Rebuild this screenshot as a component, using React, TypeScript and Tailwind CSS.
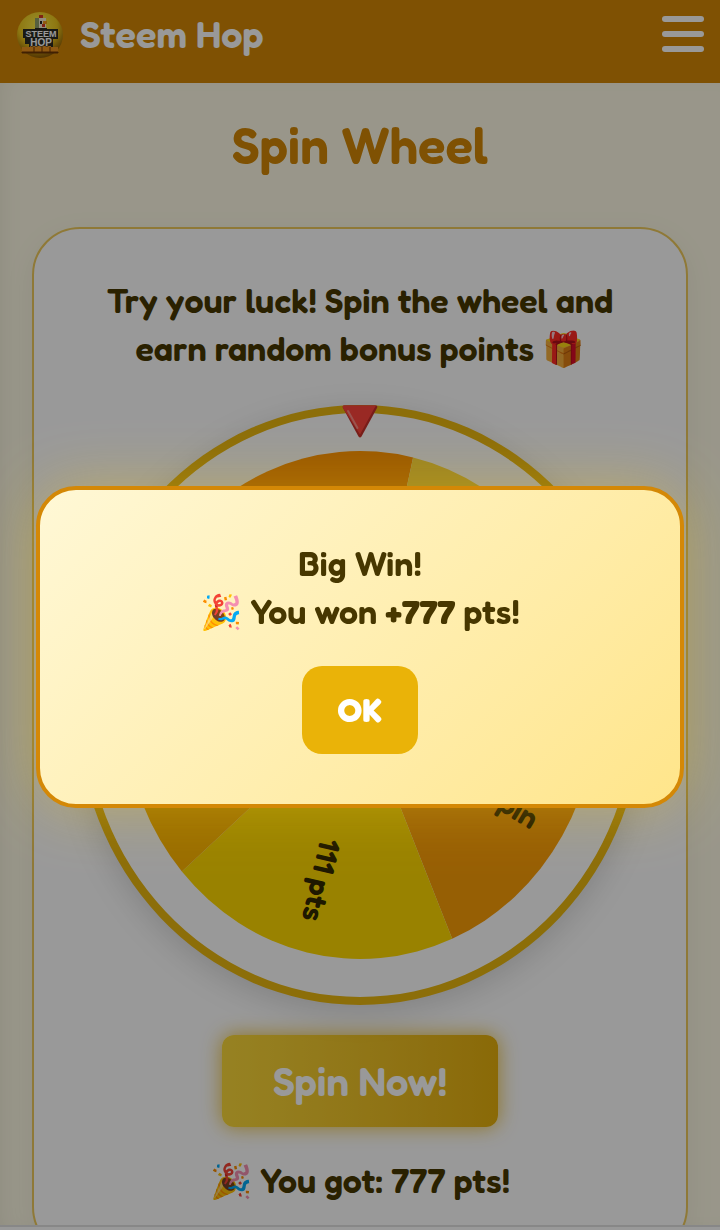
import { FC } from "react";

interface Segment {
  label: string;
  color: string;
}

const segments: Segment[] = [
  { label: "777 pts", color: "#ff9200" },
  { label: "333 pts", color: "#ffd93b" },
  { label: "Free Spin", color: "#fb9e08" },
  { label: "111 pts", color: "#ffd900" },
  { label: "555 pts", color: "#ffb600" },
];

const CX = 275;
const CY = 292;
const RX = 236;
const RY = 254;
const STEP = 360 / segments.length;
const START = -59;

// 0 degrees is straight up, clockwise
const pointAt = (deg: number, scale = 1) => {
  const rad = ((deg - 90) * Math.PI) / 180;
  const x = CX + RX * scale * Math.cos(rad);
  const y = CY + RY * scale * Math.sin(rad);
  return `${x.toFixed(1)} ${y.toFixed(1)}`;
};

export default function App() {
  return (
    <div className="relative flex h-screen flex-col overflow-hidden bg-[#fffbe6] font-['Fredoka','Lato',sans-serif] font-semibold text-[#473700]">
      <Header />
      <main className="min-h-0 flex-1 overflow-hidden px-8 shadow-[inset_12px_0_24px_-12px_rgba(0,0,0,0.08)]">
        <h1 className="mt-[30px] mb-[50px] text-center text-[51px] leading-16 text-[#d48806]">
          Spin Wheel
        </h1>
        <section className="flex flex-col items-center rounded-[48px] border-2 border-[#efca5c] bg-white px-[43px] py-12 text-center shadow-[0_8px_32px_rgba(0,0,0,0.06)]">
          <p className="text-[34px] leading-12">
            Try your luck! Spin the wheel and earn random bonus points 🎁
          </p>
          <Wheel />
          <button
            type="button"
            className="mt-[30px] rounded-xl bg-linear-to-r from-[#fbd93a] to-[#e6b00c] px-[51px] py-[18px] text-[40px] leading-14 text-white shadow-[0_0_20px_rgba(234,179,8,0.8)]"
          >
            Spin Now!
          </button>
          <p className="mt-[30px] text-[34px] leading-12">🎉 You got: 777 pts!</p>
        </section>
      </main>
      <footer className="h-[5px] shrink-0 border-t-2 border-[#e2e2e2] bg-white" />
      <WinDialog />
    </div>
  );
}

const Header: FC = () => {
  return (
    <header className="flex shrink-0 items-center justify-between bg-[#d48806] px-4 pt-[10px] pb-[25px]">
      <a href="#" className="flex items-center gap-4">
        <Logo />
        <span className="text-[38px] leading-12 text-white">Steem Hop</span>
      </a>
      <button type="button" aria-label="Menu" className="flex flex-col gap-[9px]">
        <span className="h-[6px] w-[42px] rounded-full bg-white" />
        <span className="h-[6px] w-[42px] rounded-full bg-white" />
        <span className="h-[6px] w-[42px] rounded-full bg-white" />
      </button>
    </header>
  );
};

const Wheel: FC = () => {
  return (
    <div className="relative mt-8 w-full rounded-[50%] border-8 border-[#eab710] bg-white shadow-[0_8px_32px_rgba(0,0,0,0.15)]">
      <svg viewBox="0 0 550 584" className="block h-auto w-full" aria-label="Prize wheel">
        {segments.map((s, i) => {
          const a = START + i * STEP;
          return (
            <path
              key={s.label}
              d={`M${CX} ${CY} L${pointAt(a)} A${RX} ${RY} 0 0 1 ${pointAt(a + STEP)} Z`}
              fill={s.color}
            />
          );
        })}
        {segments.map((s, i) => {
          const mid = START + (i + 0.5) * STEP;
          return (
            <text
              key={s.label}
              y="12"
              textAnchor="end"
              fontSize="30"
              fill="#332800"
              transform={`translate(${pointAt(mid, 0.875)}) rotate(${mid - 90})`}
            >
              {s.label}
            </text>
          );
        })}
      </svg>
      <svg
        viewBox="0 0 36 34"
        className="absolute -top-2 left-1/2 h-[34px] w-9 -translate-x-1/2"
        aria-hidden="true"
      >
        <path d="M2 0.5H34Q36 1 35 3L19.5 31.5Q18 33.5 16.5 31.5L1 3Q0 1 2 0.5Z" fill="#c62f2a" />
        <path d="M2 0.5H34L32.5 3L18 29.5L1 3Q0 1 2 0.5Z" fill="#ff453c" />
        <path d="M6 6L15.5 23" stroke="#ff8a82" strokeWidth="2" strokeLinecap="round" />
      </svg>
    </div>
  );
};

const WinDialog: FC = () => {
  return (
    <div className="fixed inset-0 flex items-center justify-center bg-black/40 pt-16">
      <div
        role="dialog"
        aria-modal="true"
        className="flex w-[90%] flex-col items-center rounded-[40px] border-4 border-[#d48806] bg-linear-135 from-[#fff8d6] to-[#ffe58a] p-[50px] text-center shadow-[0_0_60px_rgba(250,204,21,0.35)]"
      >
        <p className="text-[34px] leading-12">
          Big Win!
          <br />
          🎉 You won <strong className="font-black">+777</strong> pts!
        </p>
        <button
          type="button"
          className="mt-[30px] rounded-[20px] bg-[#eab308] px-9 py-5 text-[34px] leading-12 font-black text-white"
        >
          OK
        </button>
      </div>
    </div>
  );
};

const Logo: FC = () => {
  return (
    <svg viewBox="0 0 48 48" className="size-12" aria-hidden="true">
      <defs>
        <radialGradient id="sun" cx="0.45" cy="0.3" r="0.7">
          <stop offset="0" stopColor="#fff04a" />
          <stop offset="0.6" stopColor="#ecc61c" />
          <stop offset="1" stopColor="#8a5a05" />
        </radialGradient>
      </defs>
      <circle cx="24" cy="25" r="23" fill="url(#sun)" />
      <rect x="23" y="5" width="4" height="3" fill="#d63a20" />
      <rect x="19" y="8" width="11" height="11" fill="#f3ecd2" />
      <rect x="19" y="8" width="4" height="11" fill="#8fa06a" />
      <rect x="24" y="11" width="2" height="3" fill="#222222" />
      <rect x="27" y="11" width="4" height="3" fill="#f09a1a" />
      <rect x="26" y="14" width="3" height="3" fill="#d63a20" />
      <path d="M7 19H19V18H31V19H42V29H37V37H13V34H9V28H7Z" fill="#2b2b22" />
      <path d="M6 37H14V36H35V37H42V42H6Z" fill="#ee9420" />
      <path d="M6 42H42V43H6Z M18 37V42 M26 37V42 M34 37V42" fill="#6d3605" stroke="#6d3605" />
      <g
        fill="#ffffff"
        stroke="#2b2b22"
        strokeWidth="1"
        paintOrder="stroke"
        fontFamily="Liberation Sans, sans-serif"
        fontWeight="700"
        textAnchor="middle"
      >
        <text x="25" y="27" fontSize="9">STEEM</text>
        <text x="25" y="36" fontSize="10">HOP</text>
      </g>
    </svg>
  );
};
